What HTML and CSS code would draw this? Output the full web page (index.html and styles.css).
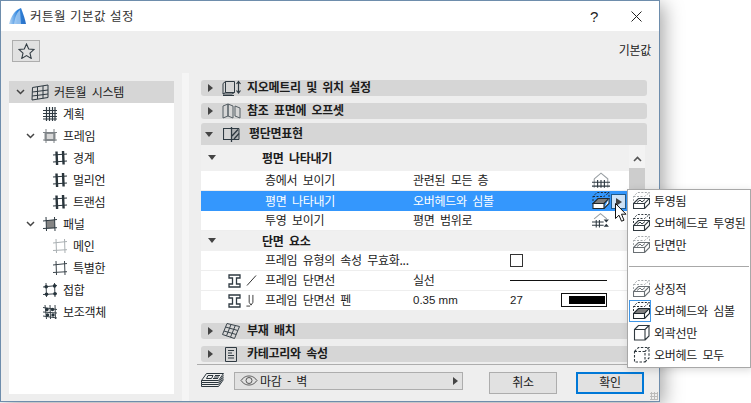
FILE: index.html
```html
<!DOCTYPE html>
<html lang="ko">
<head>
<meta charset="utf-8">
<title>커튼월 기본값 설정</title>
<link rel="stylesheet" href="styles.css">
</head>
<body>
<svg class="defs" aria-hidden="true">
  <symbol id="i-hash" viewBox="0 0 16 16"><path d="M4.500 1v14M7.500 1v14M10.500 1v14M13 1v14M1 4.500h14M1 7.500h14M1 10.500h14M1 13h14" fill="none" stroke="#2f3a42" stroke-width="1.200"/></symbol>
  <symbol id="i-frame" viewBox="0 0 16 16"><path d="M4.500 1.500l.6 13.500M11 1l.6 13.500" fill="none" stroke="#2a353c" stroke-width="2.400"/><path d="M1 5l14-1M1 12l14-1" fill="none" stroke="#2a353c" stroke-width="1.100"/></symbol>
  <symbol id="i-frame-top" viewBox="0 0 16 16"><path d="M3.500 5h9v7h-9z" fill="#d8d8d8" stroke="#8b8f92" stroke-width="2"/><path d="M4 1v14M12 1v14M1 4.500h14M1 12h14" fill="none" stroke="#7d8286" stroke-width="1"/></symbol>
  <symbol id="i-panel" viewBox="0 0 16 16"><path d="M4 4.500l8.500-.8.500 8.500-8.500.6z" fill="#858585"/><path d="M4 1l.5 14M12.500 1l.5 14M1 5l14-1.500M1 12.500l14-.8" fill="none" stroke="#2f3a42" stroke-width="1"/></symbol>
  <symbol id="i-panel-light" viewBox="0 0 16 16"><path d="M4 1l.5 14M12.500 1l.5 14M1 5l14-1.500M1 12.500l14-.8" fill="none" stroke="#aab0b3" stroke-width="1"/></symbol>
  <symbol id="i-panel-thin" viewBox="0 0 16 16"><path d="M4 1l.5 14M12.500 1l.5 14M1 5l14-1.500M1 12.500l14-.8" fill="none" stroke="#3a444b" stroke-width="1"/></symbol>
  <symbol id="i-joint" viewBox="0 0 16 16"><path d="M4 1l.5 14M12.500 1l.5 14M1 5l14-1.500M1 12.500l14-.8" fill="none" stroke="#3a444b" stroke-width="1"/><g fill="#26343c"><circle cx="4.200" cy="4.700" r="1.800"/><circle cx="12.600" cy="3.900" r="1.800"/><circle cx="4.500" cy="12.300" r="1.800"/><circle cx="13" cy="11.800" r="1.800"/></g></symbol>
  <symbol id="i-acc" viewBox="0 0 16 16"><path d="M3 1l1.500 14M8 1l.5 14M13 1l.5 14M1 3.500l14 2M1 8l14 1M1 12l14 2" fill="none" stroke="#3a444b" stroke-width="1"/><g fill="#26343c"><circle cx="5" cy="5.500" r="1.700"/><circle cx="10.500" cy="5.500" r="1.700"/><circle cx="5.500" cy="11" r="1.700"/><circle cx="11" cy="11" r="1.700"/></g></symbol>
  <symbol id="i-cw" viewBox="0 0 18 17"><path d="M1.500 3.500L17 1v12.500L1 16zM6.500 3v12M12 2v12.500M1.500 8L17 6M1.200 12l15.800-2" fill="none" stroke="#2f3a42" stroke-width="1"/></symbol>
  <symbol id="i-place" viewBox="0 0 18 16"><path d="M5 .5L17.500 3.500 12.500 15.500 .5 11.500zM9 1.500L4.500 12.800M13.300 2.500L8.500 14.200M3.500 4L15.800 7.500M2 8L14.200 11.500" fill="none" stroke="#3a444b" stroke-width="1"/></symbol>
  <symbol id="i-geo" viewBox="0 0 19 16"><path d="M3.500 1.500h9v11h-9zM1 3.500v10.500l2.500-1.500M1 3.500l2.500-2M1 14h9l2.500-1.500M1 15.500h11" fill="none" stroke="#2f3a42" stroke-width="1"/><path d="M16.500 2v10M14.500 4l2-2.500 2 2.500M14.500 10.500l2 2.500 2-2.500" fill="none" stroke="#2f3a42" stroke-width="1.200"/></symbol>
  <symbol id="i-ref" viewBox="0 0 19 16"><path d="M1 3l5-2v12l-5 2zM6 1l5 2v12l-5-2zM13 3l5 2v10l-5-2z" fill="none" stroke="#555e64" stroke-width="1"/></symbol>
  <symbol id="i-plan" viewBox="0 0 17 15"><path d="M8.500 1.500H.5v11h8" fill="none" stroke="#2f3a42" stroke-width="1.100"/><path d="M8.500 1.500h7.500v11H8.500z" fill="#b0b3b5" stroke="#2f3a42" stroke-width="1"/><path d="M8.500 0v15M9 9l6-6.500M11 12l5-5.500" fill="none" stroke="#2f3a42" stroke-width="1.300"/></symbol>
  <symbol id="i-layer" viewBox="0 0 24 15"><path d="M6.500 .5H23.500L18.500 7.500H1.500zM1.500 7.500v2h17l5-7M1.500 9.500v2h17l5-7M1.500 11.500v2h17l5-7" fill="none" stroke="#2a353c" stroke-width="1"/><path d="M8 2.500h5l-1.500 3h-5zM15 2.500h5M14 4h5M13 5.500h5" fill="none" stroke="#2a353c" stroke-width="1"/></symbol>
  <symbol id="i-doc" viewBox="0 0 12 15"><path d="M.5.500h11v14H.5zM3 3.500h6M3 6h4M3 8.500h6M3 11h6" fill="none" stroke="#2f3a42" stroke-width="1"/></symbol>
  <symbol id="i-beam" viewBox="0 0 13 14"><path d="M1 1h11v3H8.500v6H12v3H1v-3h3.500V4H1z" fill="none" stroke="#2f3a42" stroke-width="1.300"/></symbol>
  <symbol id="i-eye" viewBox="0 0 18 11"><path d="M1 5.500C4 1.500 7 1 9 1s5 .5 8 4.500C14 9.500 11 10 9 10s-5-.5-8-4.500z" fill="none" stroke="#555" stroke-width="1"/><circle cx="9" cy="5.500" r="3" fill="none" stroke="#555" stroke-width="1"/></symbol>
  <symbol id="i-house1" viewBox="0 0 16 15"><path d="M2 6l6-5 6 5v8M2 6v8" fill="none" stroke="#9aa0a4" stroke-width="1"/><path d="M0 9h16M0 12.500h16M5 7v7M8 7v7M11 7v7" fill="none" stroke="#2f3a42" stroke-width="1"/></symbol>
  <symbol id="i-house2" viewBox="0 0 17 15"><path d="M2 6l6-5 6 5" fill="none" stroke="#9aa0a4" stroke-width="1"/><path d="M0 9h11M0 12h11M4 7v7M7 7v7" fill="none" stroke="#2f3a42" stroke-width="1"/><path d="M11 6.500h5l-2.500 3zM11 13.500h5l-2.500-3z" fill="#2f3a42"/></symbol>
  <symbol id="b-hatch" viewBox="0 0 17 17"><path d="M.5 9V4.500l4-4h12v5M.5 4.500h11l5-4" fill="none" stroke="#a3a8ab" stroke-width="1" stroke-dasharray="2 1.500"/><path d="M.5 11.500l5-5h11l-5 5z" fill="#fff" stroke="#30393f" stroke-width="1.100"/><path d="M4 10.500l3-2.500 2 2 3-2.500" fill="none" stroke="#30393f" stroke-width="1"/><path d="M.5 11.500h11v5H.5zM11.500 16.500l5-5v-5" fill="#fff" stroke="#30393f" stroke-width="1.100"/></symbol>
  <symbol id="b-hatch-dark" viewBox="0 0 17 17"><path d="M.5 9V4.500l4-4h12v5M.5 4.500h11l5-4" fill="none" stroke="#30393f" stroke-width="1" stroke-dasharray="2 1.500"/><path d="M.5 11.500l5-5h11l-5 5z" fill="#fff" stroke="#30393f" stroke-width="1.100"/><path d="M4 10.500l3-2.500 2 2 3-2.500" fill="none" stroke="#30393f" stroke-width="1"/><path d="M.5 11.500h11v5H.5zM11.500 16.500l5-5v-5" fill="#fff" stroke="#30393f" stroke-width="1.100"/></symbol>
  <symbol id="b-hatch-all" viewBox="0 0 17 17"><path d="M.5 9V4.500l4-4h12v5M.5 4.500h11l5-4" fill="none" stroke="#a3a8ab" stroke-width="1" stroke-dasharray="2 1.500"/><path d="M.5 11.500l5-5h11l-5 5z" fill="#fff" stroke="#6a7074" stroke-width="1.100"/><path d="M4 10.500l3-2.500 2 2 3-2.500" fill="none" stroke="#6a7074" stroke-width="1"/><path d="M.5 11.500h11v5H.5zM11.500 16.500l5-5v-5" fill="#fff" stroke="#6a7074" stroke-width="1.100"/></symbol>
  <symbol id="b-solid" viewBox="0 0 17 17"><path d="M.5 9V4.500l4-4h12v5M.5 4.500h11l5-4" fill="none" stroke="#20292f" stroke-width="1" stroke-dasharray="2 1.500"/><path d="M.5 11.500l5-5h11l-5 5z" fill="#7f7f7f" stroke="#20292f" stroke-width="1.100"/><path d="M.5 11.500h11v5H.5z" fill="#fff" stroke="#20292f" stroke-width="1.100"/><path d="M11.500 16.500l5-5v-5" fill="#fff" stroke="#20292f" stroke-width="1.100"/></symbol>
  <symbol id="b-outline" viewBox="0 0 17 17"><path d="M1.500 5.500h10.500v10.500H1.500zM1.500 5.500l4-4h10.500l-4 4M12 16l4-4V1.500" fill="none" stroke="#30393f" stroke-width="1.100"/></symbol>
  <symbol id="b-dash" viewBox="0 0 17 17"><path d="M1.500 5.500h10.500v10.500H1.500zM1.500 5.500l4-4h10.500l-4 4M12 16l4-4V1.500" fill="none" stroke="#30393f" stroke-width="1.100" stroke-dasharray="2.500 1.500"/></symbol>
</svg>

<div class="dialog">
  <header class="titlebar">
    <svg class="logo" viewBox="0 0 17 17"><defs><linearGradient id="lg" x1="0" x2="1"><stop offset="0" stop-color="#bcd9f5"/><stop offset=".5" stop-color="#2f86e0"/><stop offset="1" stop-color="#2a6fc4"/></linearGradient></defs><path d="M0 16C2 8 6 2 12 0c2 5 4 11 5 16z" fill="url(#lg)"/><path d="M5 16C6 9 8 4 11 2l1 14z" fill="#cfe4f8" opacity=".6"/></svg>
    <span class="title">커튼월 기본값 설정</span>
    <span class="help">?</span>
    <svg class="close" viewBox="0 0 11 11"><path d="M.5.500l10 10M10.500.500l-10 10" stroke="#222" stroke-width="1" fill="none"/></svg>
  </header>

  <div class="toolbar">
    <button class="star-btn" aria-label="즐겨찾기"><svg viewBox="0 0 17 16"><path d="M8.500 1l2.200 5 5.300.5-4 3.600 1.200 5.300-4.700-2.800-4.700 2.800 1.200-5.300-4-3.600 5.300-.5z" fill="none" stroke="#333d44" stroke-width="1.100"/></svg></button>
    <span class="defaults">기본값</span>
  </div>

  <div class="main">
    <nav class="tree">
      <div class="node node-sel"><svg class="chev" viewBox="0 0 9 6"><path d="M1 1l3.500 3.500L8 1" fill="none" stroke="#444" stroke-width="1.500"/></svg><svg class="ico-cw"><use href="#i-cw"/></svg><span>커튼월 시스템</span></div>
      <div class="node lvl1"><svg class="ico"><use href="#i-hash"/></svg><span>계획</span></div>
      <div class="node lvl1 has-chev"><svg class="chev" viewBox="0 0 9 6"><path d="M1 1l3.500 3.500L8 1" fill="none" stroke="#444" stroke-width="1.500"/></svg><svg class="ico"><use href="#i-frame-top"/></svg><span>프레임</span></div>
      <div class="node lvl2"><svg class="ico"><use href="#i-frame"/></svg><span>경계</span></div>
      <div class="node lvl2"><svg class="ico"><use href="#i-frame"/></svg><span>멀리언</span></div>
      <div class="node lvl2"><svg class="ico"><use href="#i-frame"/></svg><span>트랜섬</span></div>
      <div class="node lvl1 has-chev"><svg class="chev" viewBox="0 0 9 6"><path d="M1 1l3.500 3.500L8 1" fill="none" stroke="#444" stroke-width="1.500"/></svg><svg class="ico"><use href="#i-panel"/></svg><span>패널</span></div>
      <div class="node lvl2"><svg class="ico"><use href="#i-panel-light"/></svg><span>메인</span></div>
      <div class="node lvl2"><svg class="ico"><use href="#i-panel-thin"/></svg><span>특별한</span></div>
      <div class="node lvl1"><svg class="ico"><use href="#i-joint"/></svg><span>접합</span></div>
      <div class="node lvl1"><svg class="ico"><use href="#i-acc"/></svg><span>보조객체</span></div>
    </nav>
    <div class="splitter"></div>
    <section class="pane">
      <div class="sec sec-a"><i class="tri-r"></i><svg class="sec-ico"><use href="#i-geo"/></svg><b>지오메트리 및 위치 설정</b></div>
      <div class="sec sec-b"><i class="tri-r"></i><svg class="sec-ico"><use href="#i-ref"/></svg><b>참조 표면에 오프셋</b></div>
      <div class="sec sec-open"><i class="tri-d"></i><svg class="sec-ico-plan"><use href="#i-plan"/></svg><b>평단면표현</b></div>

      <div class="table">
        <div class="rows">
          <div class="group"><i class="tri-d"></i><b>평면 나타내기</b></div>
          <div class="row"><span class="lab">층에서 보이기</span><span class="val">관련된 모든 층</span><span></span><svg class="opt"><use href="#i-house1"/></svg></div>
          <div class="row row-sel"><span class="lab">평면 나타내기</span><span class="val">오버헤드와 심볼</span><span></span><svg class="opt"><use href="#b-solid"/></svg>
            <span class="more"><i></i></span></div>
          <div class="row"><span class="lab">투영 보이기</span><span class="val">평면 범위로</span><span></span><svg class="opt"><use href="#i-house2"/></svg></div>
          <div class="group group2"><i class="tri-d"></i><b>단면 요소</b></div>
          <div class="row"><span class="lab">프레임 유형의 속성 무효화...</span><span></span><span class="check"></span></div>
          <div class="row"><span class="row-ico"><svg class="beam"><use href="#i-beam"/></svg><svg class="mini" viewBox="0 0 11 12"><path d="M1 11L10 1" stroke="#333" fill="none"/></svg></span><span class="lab">프레임 단면선</span><span class="val">실선</span><span class="line-sample"></span></div>
          <div class="row"><span class="row-ico"><svg class="beam"><use href="#i-beam"/></svg><svg class="mini" viewBox="0 0 11 14"><path d="M3 1v8l2 3 2-3V1M0 13h4" stroke="#333" fill="none"/></svg></span><span class="lab">프레임 단면선 펜</span><span class="val num">0.35 mm</span><span class="pen-cell"><span class="num">27</span><span class="pen"><i></i></span></span></div>
        </div>
        <div class="scroll"><svg class="up" viewBox="0 0 9 6"><path d="M1 5l3.500-3.500L8 5" fill="none" stroke="#555" stroke-width="1.600"/></svg><div class="thumb"></div></div>
      </div>

      <div class="sec sec-c"><i class="tri-r"></i><svg class="sec-ico2"><use href="#i-place"/></svg><b>부재 배치</b></div>
      <div class="sec sec-d"><i class="tri-r"></i><svg class="sec-ico3"><use href="#i-doc"/></svg><b>카테고리와 속성</b></div>

      <footer class="footer">
        <svg class="stack"><use href="#i-layer"/></svg>
        <div class="combo"><svg class="eye"><use href="#i-eye"/></svg><span>마감 - 벽</span><i class="tri-r"></i></div>
        <button class="btn btn-cancel">취소</button>
        <button class="btn btn-ok">확인</button>
      </footer>
    </section>
  </div>
  <div class="grip"></div>
</div>

<ul class="popup">
  <li><svg><use href="#b-hatch"/></svg><span>투영됨</span></li>
  <li><svg><use href="#b-hatch-dark"/></svg><span>오버헤드로 투영된</span></li>
  <li><svg><use href="#b-hatch-all"/></svg><span>단면만</span></li>
  <li class="sep"></li>
  <li><svg><use href="#b-hatch-all"/></svg><span>상징적</span></li>
  <li class="cur"><svg><use href="#b-solid"/></svg><span>오버헤드와 심볼</span></li>
  <li><svg><use href="#b-outline"/></svg><span>외곽선만</span></li>
  <li><svg><use href="#b-dash"/></svg><span>오버헤드 모두</span></li>
</ul>
<svg class="cursor" viewBox="0 0 12 19"><path d="M.5.500v15l3.500-3.300 2.500 6 2.500-1-2.500-6H11z" fill="#fff" stroke="#111" stroke-width="1"/></svg>
</body>
</html>
```

FILE: styles.css
```css
* { box-sizing: border-box; }
html, body { margin: 0; padding: 0; }
body {
  width: 751px; height: 403px; overflow: hidden; position: relative; background: #fff;
  font: 12px/16px "Noto Sans CJK KR", "Liberation Sans", sans-serif;
  letter-spacing: -.28px; word-spacing: 2.3px; color: #1c1c1c;
}
.defs { position: absolute; width: 0; height: 0; }
svg { display: block; flex: none; }
b { font-weight: 700; }

.dialog {
  width: 660px; height: 402px; background: #eee; position: relative;
  border: 1px solid #6e8dac; display: flex; flex-direction: column;
  box-shadow: 4px 4px 18px rgba(0,0,0,.35);
}
.titlebar { height: 30px; background: #fff; display: flex; align-items: center; padding-left: 8px; flex: none; }
.logo { width: 17px; height: 17px; margin-right: 4px; }
.title { font-size: 12.500px; letter-spacing: .5px; word-spacing: 0; color: #333; flex: 1; }
.help { margin-right: 33px; font: 400 15px "Liberation Sans", sans-serif; color: #222; }
.close { width: 11px; height: 11px; margin-right: 17px; }

.toolbar { height: 42px; flex: none; display: flex; justify-content: space-between; align-items: flex-start; padding: 9px 8px 0 11px; }
.star-btn { width: 28px; height: 22px; padding: 0; background: #e1e1e1; border: 1px solid #adadad; display: flex; align-items: center; justify-content: center; }
.star-btn svg { width: 17px; height: 16px; }
.defaults { margin-top: 2px; color: #222; }

.main { flex: 1; display: flex; min-height: 0; }
.tree { width: 165px; height: 313px; margin: 8px 8px 0 8px; background: #fff; flex: none; }
.node { height: 22px; display: flex; align-items: center; padding-bottom: 1px; }
.node svg { position: relative; top: .5px; }
.node-sel { background: #d6d6d6; padding-left: 7px; }
.node-sel .chev { margin-right: 6px; }
.ico-cw { width: 18px; height: 17px; margin-right: 5px; }
.ico { width: 16px; height: 16px; margin-right: 5px; }
.chev { width: 9px; height: 6px; }
.lvl1 { padding-left: 33px; }
.lvl1.has-chev { padding-left: 17px; }
.lvl1.has-chev .chev { margin-right: 7px; }
.lvl2 { padding-left: 43px; }
.splitter { width: 7px; background: #f5f5f5; flex: none; }

.pane { flex: 1; padding: 7px 0 0 0; display: flex; flex-direction: column; min-width: 0; }
.sec {
  width: 446px; height: 16px; margin-left: 12px; background: #d6d6d6; border-radius: 3px;
  display: flex; align-items: center; padding-left: 7px; flex: none; line-height: 14px;
}
.sec b { position: relative; top: -1px; }
.sec-a { margin-bottom: 7px; }
.sec-b { margin-bottom: 4px; }
.sec-open { height: 22px; border-radius: 3px 3px 0 0; padding-left: 4px; }
.sec-c { margin-top: 13px; margin-bottom: 7px; }
.tri-r { width: 0; height: 0; border: 4px solid transparent; border-left: 5px solid #444; border-right: 0; flex: none; }
.tri-d { width: 0; height: 0; border: 4px solid transparent; border-top: 5px solid #444; border-bottom: 0; flex: none; }
.sec-ico { width: 19px; height: 16px; margin: 0 6px 0 9px; overflow: visible; }
.sec-ico-plan { width: 17px; height: 15px; margin: 0 9px 0 10px; overflow: visible; }
.sec-ico2 { width: 18px; height: 16px; margin: 0 7px 0 9px; overflow: visible; }
.sec-ico3 { width: 12px; height: 15px; margin: 0 10px 0 12px; overflow: visible; }

.table { display: flex; margin-left: 12px; height: 165px; flex: none; width: 444px; }
.rows { width: 428px; flex: none; }
.group { height: 26px; background: #f0f0f0; display: flex; align-items: center; padding: 0 0 1px 7px; }
.group b { margin-left: 46px; }
.group2 { height: 20px; }
.row {
  height: 20px; background: #fff; display: grid; position: relative; align-items: center;
  grid-template-columns: 148px 97px 82px 18px; padding: 0 0 1px 64px; border-bottom: 1px solid #eee;
}
.row-sel { background: #3497fd; color: #fff; border-bottom: 0; }
.lab, .val { white-space: nowrap; }
.num { font-family: "Liberation Sans", sans-serif; font-size: 11.500px; letter-spacing: 0; word-spacing: 0; }
.opt { width: 18px; height: 17px; }
.more { position: absolute; left: 410px; top: 3px; width: 15px; height: 15px; background: #cfe3f7; border: 1px solid #1f5a8c; display: flex; align-items: center; justify-content: center; }
.more i { width: 0; height: 0; border: 4.500px solid transparent; border-left: 6px solid #444; border-right: 0; }
.check { width: 13px; height: 13px; border: 1px solid #333; background: #fff; }
.row-ico { position: absolute; left: 27px; top: 3px; display: flex; gap: 5px; }
.beam { width: 13px; height: 14px; }
.mini { width: 11px; height: 13px; }
.line-sample { height: 1px; background: #111; width: 97px; }
.pen-cell { display: flex; justify-content: space-between; width: 97px; align-items: center; }
.pen { width: 46px; height: 14px; border: 1px solid #111; background: #fff; padding: 2px 1px 2px 7px; display: flex; }
.pen i { flex: 1; background: #000; }

.scroll { width: 16px; position: relative; background: #f3f3f3; }
.up { width: 9px; height: 6px; position: absolute; left: 4px; top: 11px; }
.thumb { position: absolute; top: 23px; left: 0; width: 16px; height: 60px; background: #cdcdcd; }

.footer { margin-top: 2px; border-top: 1px solid #adadad; margin-left: 8px; padding: 7px 0 0 3px; display: flex; align-items: flex-start; }
.stack { width: 24px; height: 15px; margin-top: 1px; margin-right: 10px; }
.combo { width: 229px; height: 18px; background: #e1e1e1; border: 1px solid #adadad; display: flex; align-items: center; padding: 0 4px 1px 5px; }
.combo span { flex: 1; }
.eye { width: 18px; height: 11px; margin-right: 2px; }
.btn {
  width: 68px; height: 22px; font: inherit; letter-spacing: inherit; color: #1c1c1c; background: #e1e1e1;
  border: 1px solid #adadad; padding: 0 0 2px; margin-left: 26px;
}
.btn-ok { margin-left: 19px; border: 2px solid #0078d7; }
.grip { position: absolute; right: 1px; bottom: 1px; width: 8px; height: 8px; background: radial-gradient(circle, #bbb 1px, transparent 1.200px) 0 0 / 3px 3px; }

.popup {
  position: absolute; left: 627px; top: 189px; width: 124px; height: 179px; margin: 0; padding: 0 0 0 1px;
  list-style: none; background: #fff; border: 1px solid #a8a8a8; box-shadow: 2px 2px 8px rgba(0,0,0,.15);
}
.popup li { height: 22px; display: flex; align-items: center; gap: 4px; padding: 0 0 1px 1px; border: 1px solid transparent; width: 120px; white-space: nowrap; }
.popup li svg { width: 17px; height: 17px; margin-left: 2px; }
.popup .sep { height: 1px; padding: 0; margin: 10px 0 11px 0; border: 0; background: #a8a8a8; width: 120px; }
.popup .cur { border: 1px solid #3f97e8; width: 22px; overflow: visible; }
.cursor { position: absolute; left: 615px; top: 203px; width: 12px; height: 19px; }
```
